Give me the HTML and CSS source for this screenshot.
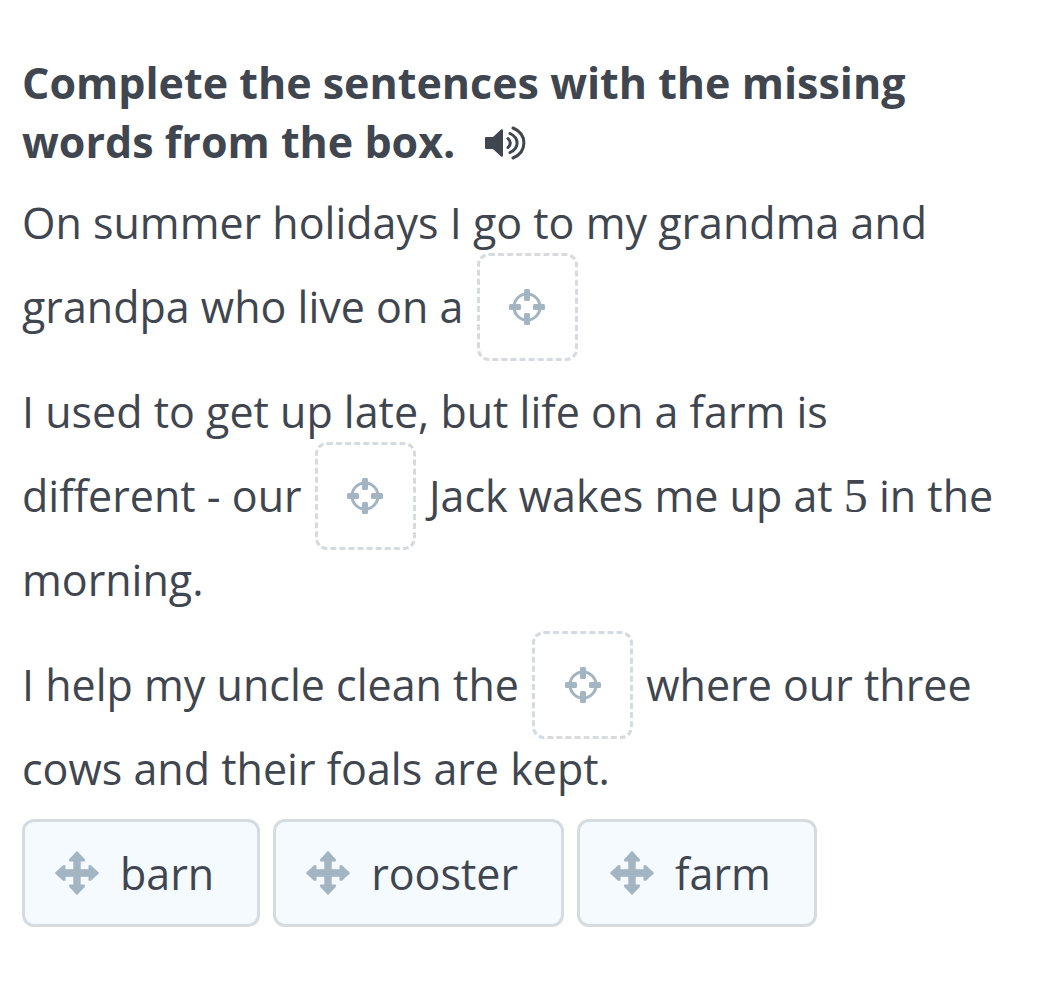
FILE: index.html
```html
<!DOCTYPE html>
<html lang="en">
<head>
  <meta charset="UTF-8" />
  <meta name="viewport" content="width=device-width, initial-scale=1" />
  <title>Missing words</title>
  <link rel="stylesheet" href="styles.css">
</head>
<body>

  <!-- shared icons -->
  <svg class="sprite" aria-hidden="true">
    <symbol id="target" viewBox="0 0 38 38">
      <circle cx="19" cy="19" r="13" fill="none" stroke="currentColor" stroke-width="3" />
      <rect x="16" y="1" width="6" height="12" rx="1.500" />
      <rect x="16" y="25" width="6" height="12" rx="1.500" />
      <rect x="1" y="16" width="12" height="6" rx="1.500" />
      <rect x="25" y="16" width="12" height="6" rx="1.500" />
    </symbol>
    <symbol id="move" viewBox="0 0 44 44">
      <path d="M22 1.500 29 9V10.500H25V19H33.500V15H35L42.500 22 35 29H33.500V25H25V33.500H29V35L22 42.500 15 35V33.500H19V25H10.500V29H9L1.500 22 9 15H10.500V19H19V10.500H15V9Z" stroke="currentColor" stroke-width="1" stroke-linejoin="round" />
    </symbol>
  </svg>

  <main>
    <h1>Complete the sentences with the missing words from the box.
      <button class="sound" type="button" aria-label="Listen">
        <svg viewBox="0 0 42 36">
          <path d="M2 12H9L17 4.500Q19 3.500 19 5.500V30.500Q19 32.500 17 31.500L9 24H2Q1 24 1 23V13Q1 12 2 12Z" />
          <path d="M24 13.500Q28.500 18 24 22.500M26 8.500C35.500 13 35.500 23 26 27.500M29 3C43.500 9 43.500 27 29 33" fill="none" stroke="currentColor" stroke-width="3" stroke-linecap="round" />
        </svg>
      </button>
    </h1>

    <div class="sentences">
      <p>On summer holidays I go to my grandma and grandpa who live on a <button class="gap" type="button" aria-label="Gap 1"><svg><use href="#target" /></svg></button></p>
      <p>I used to get up late, but life on a farm is different - our <button class="gap" type="button" aria-label="Gap 2"><svg><use href="#target" /></svg></button> Jack wakes me up at <span class="number">5</span> in the morning.</p>
      <p>I help my uncle clean the <button class="gap" type="button" aria-label="Gap 3"><svg><use href="#target" /></svg></button> where our three cows and their foals are kept.</p>
    </div>

    <div class="words">
      <button class="word" type="button"><svg><use href="#move" /></svg>barn</button>
      <button class="word" type="button"><svg><use href="#move" /></svg>rooster</button>
      <button class="word" type="button"><svg><use href="#move" /></svg>farm</button>
    </div>
  </main>

</body>
</html>
```
FILE: styles.css
```css
* {
  box-sizing: border-box;
}
body {
  margin: 0;
  background: #fff;
  color: #3f464f;
  font-family: "Open Sans", sans-serif;
  font-size: 43px;
}
svg {
  fill: currentColor;
}
button {
  color: inherit;
  font: inherit;
  cursor: pointer;
}
.sprite {
  display: none;
}
main {
  padding: 53px 44px 53px 22px;
}
h1 {
  margin: 0;
  font-size: 43px;
  font-weight: 700;
  line-height: 59px;
}
.sound {
  margin: -8px 0 -8px 17px;
  padding: 0;
  border: 0;
  background: none;
  vertical-align: -3px;
}
.sound svg {
  display: block;
  width: 42px;
  height: 36px;
}
.sentences {
  margin-top: 10px;
  line-height: 84px;
}
p {
  margin: 0 0 21px;
}
p:last-child {
  margin-bottom: 0;
}
.gap {
  display: inline-flex;
  align-items: center;
  justify-content: center;
  width: 101px;
  height: 108px;
  margin: -24px 2px -14px;
  padding: 0;
  border: 3px dashed #d6dbdf;
  border-radius: 12px;
  background: #fff;
  color: #a3b5c3;
  vertical-align: middle;
}
.gap svg {
  width: 38px;
  height: 38px;
}
.number {
  font-family: "Liberation Serif", serif;
  font-size: 48px;
  line-height: 1;
}
.words {
  display: flex;
  flex-wrap: wrap;
  gap: 13px;
  margin-top: 8px;
}
.word {
  display: flex;
  align-items: center;
  gap: 20px;
  height: 108px;
  padding: 0 43px 0 29px;
  border: 3px solid #d6dbdf;
  border-radius: 12px;
  background: #f5faff;
}
.word svg {
  width: 46px;
  height: 46px;
  color: #a3b5c3;
}
```
